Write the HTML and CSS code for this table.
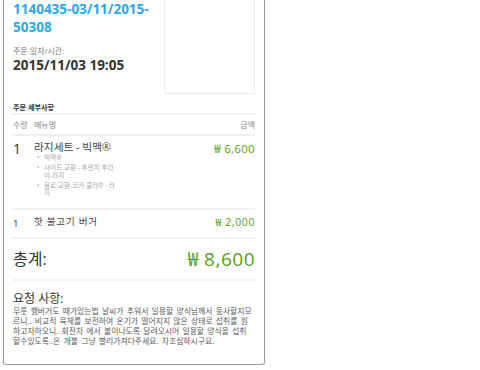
FILE: index.html
```html
<!DOCTYPE html>
<html lang="ko">
<head>
<meta charset="utf-8">
<title>주문 상세</title>
<link rel="stylesheet" href="styles.css">
</head>
<body>
<div class="card">
  <div class="top">
    <div class="info">
      <div class="label label--hidden">주문 번호:</div>
      <div class="order-no">1140435-03/11/2015-<wbr>50308</div>
      <div class="label">주문 일자/시간:</div>
      <div class="date">2015/11/03 19:05</div>
    </div>
    <div class="photo"></div>
  </div>

  <h3 class="section-title">주문 세부사항</h3>

  <div class="row thead">
    <span class="qty">수량</span>
    <span class="name">메뉴명</span>
    <span class="price">금액</span>
  </div>

  <div class="row item">
    <span class="qty">1</span>
    <div class="name">
      <div class="item-name">라지세트 - 빅맥®</div>
      <ul class="options">
        <li>빅맥®</li>
        <li>사이드 교환 - 후렌치 후라이-라지</li>
        <li>음료 교환-코카 콜라® - 라지</li>
      </ul>
    </div>
    <span class="price">₩ 6,600</span>
  </div>

  <div class="row item item--small">
    <span class="qty">1</span>
    <div class="name">
      <div class="item-name">핫 불고기 버거</div>
    </div>
    <span class="price">₩ 2,000</span>
  </div>

  <div class="total">
    <span class="total-label">총계:</span>
    <span class="total-price">₩ 8,600</span>
  </div>

  <div class="request">
    <h4 class="request-title">요청 사항:</h4>
    <p class="request-text">무릇 햄버거도 때가있는법 날씨가 추워서 일용할 양식님께서 동사할지모<br>르니.. 비교적 육체를 보전하여 온기가 떨어지지 않은 상태로 섭취를 원<br>하고자하오니. 회전차 에서 불이나도록 달려오시어 일용할 양식을 섭취<br>할수있도록..은 개뿔 그냥 빨리가져다주세요. 차조심하시구요.</p>
  </div>
</div>
</body>
</html>
```

FILE: styles.css
```css
* {
  box-sizing: border-box;
}

html, body {
  margin: 0;
  padding: 0;
  background: #fff;
}

body {
  font-family: "Open Sans", "Noto Sans CJK KR", sans-serif;
  color: #333;
}

.card {
  width: 262px;
  margin: -26px 0 0 3px;
  padding: 10px 9px 9px;
  border: 1px solid #9c9c9c;
  border-radius: 0 0 3px 3px;
  box-shadow: 0 1px 2px rgba(0, 0, 0, 0.15);
  background: #fff;
}

.top {
  display: flex;
  justify-content: space-between;
  align-items: flex-start;
}

.info {
  width: 150px;
}

.label {
  font-size: 8px;
  line-height: 11px;
  color: #777;
}

.label--hidden {
  visibility: hidden;
  margin-bottom: 4px;
}

.order-no {
  font-size: 13.5px;
  font-weight: 700;
  line-height: 18px;
  color: #2ba8ee;
  margin-bottom: 9px;
}

.date {
  font-size: 13.5px;
  font-weight: 700;
  line-height: 18px;
  color: #333;
}

.photo {
  width: 91px;
  height: 109px;
  border: 1px solid #ececec;
  border-top: none;
}

.section-title {
  margin: 8px 0 0;
  padding-bottom: 1px;
  font-size: 7.1px;
  line-height: 10px;
  font-weight: 700;
  color: #333;
  border-bottom: 2px solid #f0f0f0;
}

.row {
  display: grid;
  grid-template-columns: 21px 1fr auto;
  align-items: start;
  border-bottom: 2px solid #f0f0f0;
}

.thead {
  height: 21px;
  align-items: center;
  font-size: 8px;
  line-height: 19px;
  color: #888;
}

.thead .price {
  text-align: right;
}

.item {
  padding: 5px 0 12px;
}

.item .qty {
  font-size: 14px;
  line-height: 14px;
  margin-top: 0.5px;
  color: #333;
}

.item-name {
  font-size: 10.7px;
  line-height: 12px;
  color: #444;
}

.item .price {
  font-size: 11.5px;
  line-height: 13px;
  letter-spacing: 0.3px;
  margin-top: 1px;
  color: #52a01c;
}

.options {
  list-style: none;
  margin: 1px 0 0;
  padding: 0 0 0 10px;
  width: 85px;
  font-size: 6.6px;
  line-height: 7.2px;
  color: #aaa;
}

.options li {
  position: relative;
  margin-top: 3.2px;
}

.options li:first-child {
  margin-top: 0;
}

.options li::before {
  content: "•";
  position: absolute;
  left: -7px;
  top: 0;
}

.item--small {
  height: 29px;
  padding: 5px 0 0;
}

.item--small .qty {
  font-size: 9.5px;
  line-height: 14px;
  margin-top: 2px;
}

.item--small .item-name {
  font-size: 9.5px;
  line-height: 14px;
  letter-spacing: 0.8px;
}

.item--small .price {
  font-size: 10.5px;
  line-height: 14px;
  letter-spacing: 0.6px;
  margin-top: 0;
}

.total {
  display: flex;
  justify-content: space-between;
  align-items: center;
  height: 42px;
  border-bottom: 2px solid #f0f0f0;
}

.total-label {
  font-size: 16px;
  line-height: 24px;
  color: #333;
}

.total-price {
  font-size: 19px;
  line-height: 24px;
  letter-spacing: 0.5px;
  color: #52a01c;
}

.request-title {
  margin: 11px 0 0;
  font-size: 12px;
  line-height: 14px;
  font-weight: 400;
  color: #333;
}

.request-text {
  margin: 0 0 9px;
  font-size: 7.83px;
  line-height: 10px;
  word-spacing: 1.2px;
  white-space: nowrap;
  color: #5a5a5a;
}
```
